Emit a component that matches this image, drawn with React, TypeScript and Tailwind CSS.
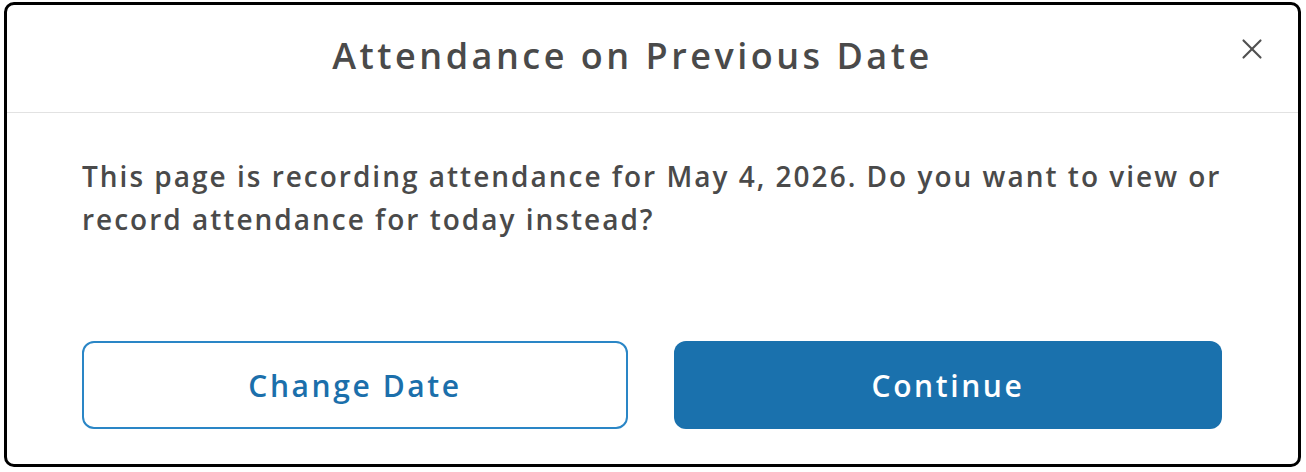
import { X } from "lucide-react";

const font = { fontFamily: '"Open Sans", "DejaVu Sans", sans-serif' };

export default function App() {
  return (
    <div className="w-[1306px] h-[472px] bg-white" style={font}>
      <div className="ml-[4px] mt-[2px] w-[1297px] h-[465px] border-[3px] border-black rounded-[10px] flex flex-col overflow-hidden">
        {/* header */}
        <div className="relative h-[108px] shrink-0 border-b border-[#e2e2e2] flex items-center justify-center pb-[6px] pr-[40px]">
          <h2 className="text-[36px] font-semibold text-[#4a4a4a] tracking-[3.5px]">
            Attendance on Previous Date
          </h2>
          <button className="absolute right-[29px] top-[27px] text-[#505050]">
            <X className="w-[34px] h-[34px]" strokeWidth={1.5} />
          </button>
        </div>

        {/* body */}
        <div className="flex-1 flex flex-col px-[75px] pt-[42px] pb-[35px]">
          <p className="text-[28px] leading-[43px] font-semibold text-[#4a4a4a] tracking-[2px]">
            This page is recording attendance for May 4, 2026. Do you want to view or record
            attendance for today instead?
          </p>
          <div className="mt-auto flex gap-[46px]">
            <button className="w-[546px] h-[88px] rounded-[12px] border-2 border-[#2a86c6] text-[#1b6fab] text-[30px] font-semibold tracking-[2.6px]">
              Change Date
            </button>
            <button className="w-[548px] h-[88px] rounded-[12px] bg-[#1a71ad] text-white text-[30px] font-semibold tracking-[2.6px]">
              Continue
            </button>
          </div>
        </div>
      </div>
    </div>
  );
}
